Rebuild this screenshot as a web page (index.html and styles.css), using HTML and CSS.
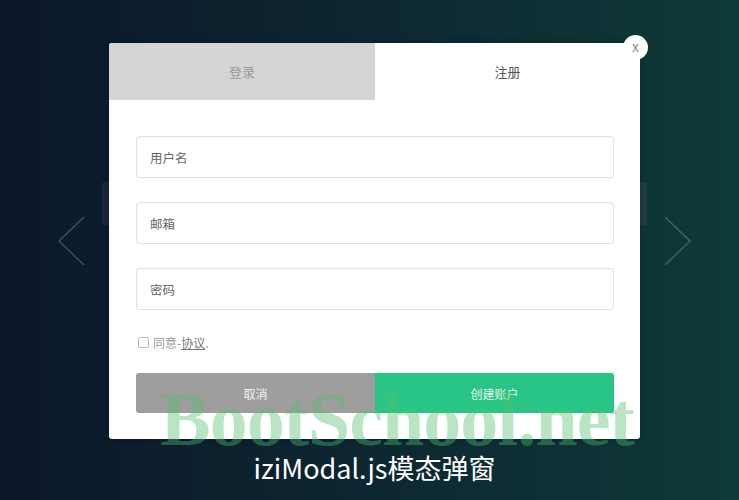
FILE: index.html
```html
<!DOCTYPE html>
<html lang="zh">
<head>
    <meta charset="UTF-8">
    <meta name="viewport" content="width=device-width, initial-scale=1.0">
    <title>iziModal.js模态弹窗</title>
    <link rel="stylesheet" href="styles.css">
</head>
<body>
    <div class="stage">
        <div class="slider">
            <svg class="arrow" width="27" height="50" viewBox="0 0 27 50">
                <polyline points="26,1 1,25 26,49" />
            </svg>

            <div class="modal-wrap">
                <div class="ghost ghost-left"></div>
                <div class="ghost ghost-right"></div>

                <div class="modal">
                    <div class="tabs">
                        <div class="tab">登录</div>
                        <div class="tab active">注册</div>
                    </div>

                    <form class="modal-body">
                        <div class="fields">
                            <input type="text" placeholder="用户名">
                            <input type="text" placeholder="邮箱">
                            <input type="password" placeholder="密码">
                        </div>
                        <label class="agree">
                            <span class="check"></span>
                            同意-<a href="#">协议</a>.
                        </label>
                        <div class="actions">
                            <button type="button" class="btn-cancel">取消</button>
                            <button type="submit" class="btn-submit">创建账户</button>
                        </div>
                    </form>
                </div>

                <div class="close">x</div>
            </div>

            <svg class="arrow" width="27" height="50" viewBox="0 0 27 50">
                <polyline points="1,1 26,25 1,49" />
            </svg>
        </div>

        <div class="caption">iziModal.js模态弹窗</div>
        <div class="watermark">BootSchool.net</div>
    </div>
</body>
</html>
```

FILE: styles.css
```css
body {
    margin: 0;
    height: 500px;
    overflow: hidden;
    font-family: "Noto Sans CJK SC", "Noto Sans", sans-serif;
    background: linear-gradient(to right, #0c1729 0%, #0d2531 45%, #0e3a38 100%);
}
.stage {
    position: relative;
    display: flex;
    flex-direction: column;
    align-items: center;
    padding: 43px 0 0 10px;
}
.slider {
    display: flex;
    align-items: center;
    gap: 24px;
}
.arrow {
    fill: none;
    stroke: rgba(160, 180, 200, 0.35);
    stroke-width: 1.4;
}
.modal-wrap {
    position: relative;
}
.ghost {
    position: absolute;
    top: 139px;
    width: 12px;
    height: 43px;
    border-radius: 3px;
    background: rgba(255, 255, 255, 0.06);
}
.ghost-left {
    left: -7px;
}
.ghost-right {
    right: -7px;
}
.modal {
    position: relative;
    width: 531px;
    background: white;
    border-radius: 3px;
    overflow: hidden;
    box-shadow: 0 0 6px rgba(0,0,0,0.3);
}
.tabs {
    display: grid;
    grid-template-columns: 266px 1fr;
    height: 57px;
}
.tab {
    display: flex;
    align-items: center;
    justify-content: center;
    font-size: 13px;
    color: #999;
    background: #d5d5d5;
}
.tab.active {
    background: white;
    color: #555;
}
.modal-body {
    padding: 36px 26px 26px 27px;
}
.fields {
    display: flex;
    flex-direction: column;
    gap: 24px;
}
.fields input {
    height: 42px;
    box-sizing: border-box;
    border: 1px solid #e2e2e2;
    border-radius: 3px;
    padding: 0 13px;
    font-family: inherit;
    font-size: 12.5px;
    box-shadow: inset 0 1px 2px rgba(0,0,0,0.03);
}
.fields input::placeholder {
    color: #666;
}
.agree {
    display: flex;
    align-items: center;
    height: 16px;
    margin: 24px 0 0 2px;
    font-size: 12px;
    color: #999;
}
.check {
    width: 9px;
    height: 9px;
    border: 1px solid #bbb;
    border-radius: 2px;
    margin-right: 4px;
}
.agree a {
    color: #777;
    text-decoration: underline;
}
.actions {
    display: grid;
    grid-template-columns: 239px 1fr;
    margin-top: 23px;
    border-radius: 3px;
    overflow: hidden;
}
.actions button {
    height: 40px;
    border: none;
    font-family: inherit;
    font-size: 12px;
    color: rgba(255,255,255,0.9);
    cursor: pointer;
}
.btn-cancel {
    background: #9e9e9e;
}
.btn-submit {
    background: #29c586;
}
.close {
    position: absolute;
    top: -8px;
    right: -8px;
    width: 25px;
    height: 25px;
    border-radius: 50%;
    background: white;
    color: #888;
    font-family: "Liberation Sans", sans-serif;
    font-size: 14px;
    line-height: 24px;
    text-align: center;
}
.caption {
    margin-top: 13px;
    font-size: 27px;
    line-height: 32px;
    color: white;
}
.watermark {
    position: absolute;
    top: 376px;
    left: 160px;
    font-family: "Liberation Serif", serif;
    font-weight: bold;
    font-size: 76px;
    letter-spacing: -1px;
    color: rgba(80, 190, 110, 0.4);
    pointer-events: none;
}
```
